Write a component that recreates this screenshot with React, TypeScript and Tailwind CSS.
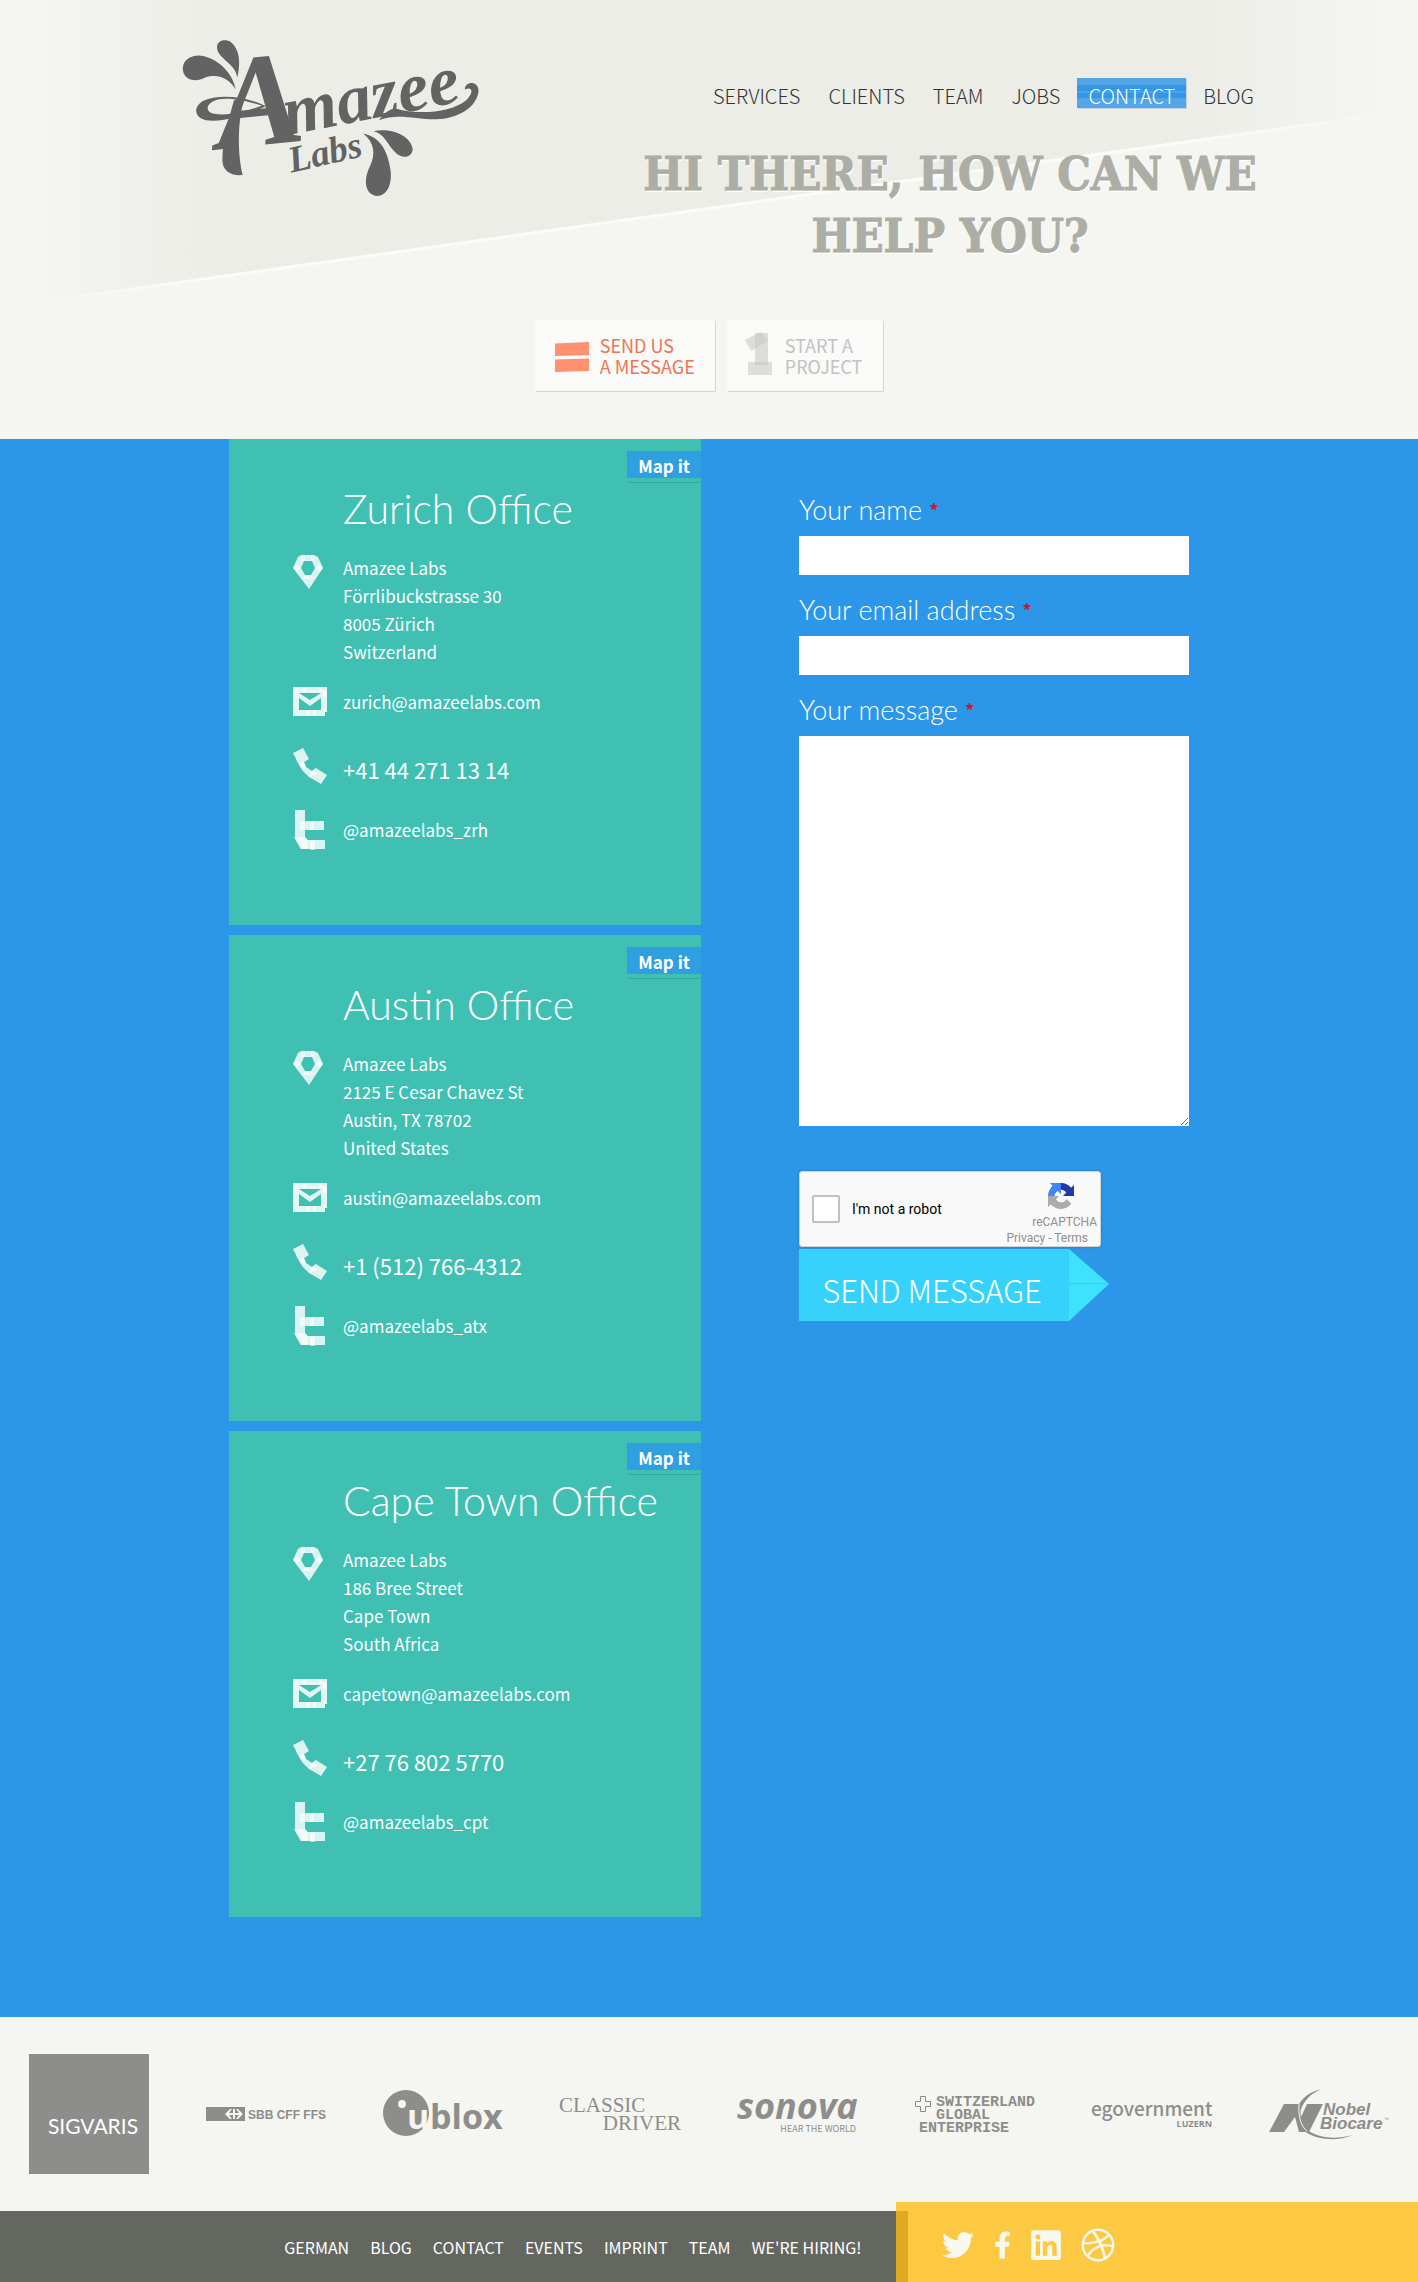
import React from 'react';
import { FaTwitter, FaFacebookF, FaLinkedin, FaDribbble } from 'react-icons/fa';

const sans = "font-['Noto_Sans_CJK_JP','Noto_Sans',sans-serif]";
const display = "font-['Lato',sans-serif]";

function Logo() {
  return (
    <svg viewBox="90 50 910 490" className="h-[163px] w-[303px] overflow-visible" fill="#636363" role="img" aria-label="Amazee Labs">
      <path d="M262 172 C255 128 206 118 201 84 C199 60 226 54 243 66 C270 88 272 130 262 172Z" />
      <path d="M257 207 C238 178 208 158 165 172 C135 190 98 178 98 145 C98 115 130 100 160 107 C210 120 248 160 257 207Z" />
      <path fillRule="evenodd" d="M348 258 C290 228 205 220 160 242 C128 260 132 292 168 300 C225 308 300 280 348 258Z M336 257 C290 240 215 224 184 246 C166 260 170 276 192 281 C240 288 290 272 336 257Z" />
      <path d="M284 230 C262 300 262 400 278 465 C240 468 215 450 217 415 C218 370 232 310 252 240Z" />
      <g fontFamily="'Liberation Serif', serif" fontWeight="700" fontStyle="italic">
        <text transform="translate(206 388) rotate(-6)" fontSize="400">A</text>
        <text transform="translate(412 345) rotate(-11)" fontSize="210">mazee</text>
        <text transform="translate(424 458) rotate(-13)" fontSize="112">Labs</text>
      </g>
      <path d="M688 300 C700 282 718 268 735 264 C800 284 900 280 950 240 C976 214 966 198 946 208 C944 184 985 178 987 210 C985 262 920 297 860 297 C790 297 745 278 688 300Z" />
      <path d="M640 340 C672 365 680 400 660 440 C640 480 645 525 683 528 C715 525 726 490 723 455 C715 390 690 350 640 340Z" />
      <path d="M672 333 C702 340 712 370 735 395 C755 417 786 415 789 388 C785 345 722 322 672 333Z" />
    </svg>
  );
}

const nav = ['SERVICES', 'CLIENTS', 'TEAM', 'JOBS', 'CONTACT', 'BLOG'];

function Header() {
  return (
    <header className="relative h-[439px] bg-[#f5f6f1]">
      <svg className="absolute inset-0 h-[320px] w-full" viewBox="0 0 1418 320" preserveAspectRatio="none" aria-hidden="true">
        <defs>
          <linearGradient id="wedge" x1="0" x2="1" y1="0" y2="0">
            <stop offset="0.02" stopColor="#ecede7" stopOpacity="0" />
            <stop offset="0.15" stopColor="#ecede7" />
            <stop offset="0.84" stopColor="#ecede7" />
            <stop offset="0.98" stopColor="#ecede7" stopOpacity="0" />
          </linearGradient>
          <linearGradient id="edge" x1="0" x2="1" y1="0" y2="0">
            <stop offset="0.03" stopColor="#fbfbf8" stopOpacity="0" />
            <stop offset="0.15" stopColor="#fbfbf8" />
            <stop offset="0.84" stopColor="#fbfbf8" />
            <stop offset="0.98" stopColor="#fbfbf8" stopOpacity="0" />
          </linearGradient>
        </defs>
        <path d="M0 0H1418V108L0 306Z" fill="url(#wedge)" />
        <path d="M0 306L1418 108V111L0 309Z" fill="url(#edge)" />
      </svg>
      <div className="relative mx-auto flex h-[320px] max-w-[1110px] justify-between">
        <a href="#home" className="mt-[37px] ml-[26px] block h-[163px]"><Logo /></a>
        <div className="flex w-[628px] flex-col">
          <nav className="mt-[78px] flex justify-end gap-[6px] text-[20px] leading-6 font-light text-[#333]">
            {nav.map((n) => (
              <a
                key={n}
                href={'#' + n.toLowerCase()}
                className={
                  n === 'CONTACT'
                    ? 'bg-[linear-gradient(#52a6e8_0_7px,#3497e6_7px_13px,#4aa2e8_13px_15px,#3497e6_15px_20px,#52a6e8_20px)] px-[11px] pt-[6px] text-white shadow-[1px_1px_0_#c5d3dc]'
                    : 'px-[11px] pt-[6px] last:pr-[10px]'
                }
              >
                {n}
              </a>
            ))}
          </nav>
          <h1 className="mt-[35px] text-center font-['DejaVu_Serif_Condensed','DejaVu_Serif',serif] text-[47px] leading-[62px] font-bold whitespace-nowrap text-[#acaea5] [-webkit-text-stroke:1px_#acaea5] [text-shadow:1px_2px_0_#fff]">
            HI THERE, HOW CAN WE
            <br />
            HELP YOU?
          </h1>
        </div>
      </div>
      <div className="relative flex justify-center gap-3 text-[18px] leading-[21px]">
        <a href="#message" className="flex h-[71px] items-center bg-[#fafaf8] pr-5 pl-5 text-[#ee7554] shadow-[1px_1px_0_#d6d7d3]">
          <svg viewBox="0 0 34 32" className="mt-[2px] mr-[11px] h-8 w-[34px]" fill="#ff9070">
            <path d="M0 2.500L34 1V14L0 15ZM0 18.500L34 17.500V30L0 31Z" />
          </svg>
          <span>SEND US<br />A MESSAGE</span>
        </a>
        <a href="#project" className="flex h-[71px] items-center bg-[#fafaf8] pr-[21px] pl-[18px] text-[#c2c2c2] shadow-[1px_1px_0_#d6d7d3]">
          <svg viewBox="0 0 27 43" className="mr-[13px] mb-1 h-[43px] w-[27px]" fill="#c4c4c4" fillOpacity="0.55">
            <path d="M0 8L16 0L23 9L6 19Z" />
            <path d="M10 1H23V33H10Z" />
            <path d="M3 30H27V43H3Z" />
          </svg>
          <span>START A<br />PROJECT</span>
        </a>
      </div>
    </header>
  );
}

function PinIcon() {
  return (
    <svg viewBox="0 0 30 34" className="h-[34px] w-[30px]" fill="#fff" fillOpacity="0.8">
      <path fillRule="evenodd" d="M8 0H21L25 2L30 13L16 34L0 13L5 2ZM11 6L8 13L12 20H18L22 13L19 6Z" />
      <path fillOpacity="0.5" d="M8 0H12V6H8ZM18 0H21V6H18ZM0 13L4 9L8 13L4 17ZM22 13L26 9L30 13L26 17ZM12 20H18L22 24H8Z" />
    </svg>
  );
}

function MailIcon() {
  return (
    <svg viewBox="0 0 34 29" className="h-[29px] w-[34px]" fill="#fff" fillOpacity="0.85">
      <path fillRule="evenodd" d="M0 0H34V25H32V29H0ZM6 6L17 13L28 6ZM6 11V23H28V11L17 19Z" />
      <path fillOpacity="0.6" d="M0 3L5 4V9L1 10ZM29 4L34 3V10L29 9ZM13 23H16V29H13ZM20 23H23V29H20ZM10 0H13V5H10ZM26 0H29V5H26Z" />
    </svg>
  );
}

function PhoneIcon() {
  return (
    <svg viewBox="0 0 34 36" className="h-9 w-[34px]" fill="#fff" fillOpacity="0.82">
      <path d="M0 5L10 0L16 11L11 14L13 19L19 23L23 20L34 27L28 36L16 29L10 23L5 15Z" />
      <path fillOpacity="0.6" d="M5 15L11 14L13 19L10 23ZM16 29L19 23L23 20L24 26Z" />
    </svg>
  );
}

function TwitterT() {
  return (
    <svg viewBox="0 0 31 40" className="h-10 w-[31px]" fill="#fff" fillOpacity="0.82">
      <path d="M1 0H11V11H30V20H11V27L14 30H31V39H7L0 27H1Z" />
      <path fillOpacity="0.6" d="M6 11H11V20H6ZM16 11H20V20H16ZM0 27H11L14 31V39H7ZM16 30H21V40H16Z" />
    </svg>
  );
}

const offices = [
  { city: 'Zurich', lines: ['Amazee Labs', 'Förrlibuckstrasse 30', '8005 Zürich', 'Switzerland'], mail: 'zurich@amazeelabs.com', phone: '+41 44 271 13 14', tw: '@amazeelabs_zrh' },
  { city: 'Austin', lines: ['Amazee Labs', '2125 E Cesar Chavez St', 'Austin, TX 78702', 'United States'], mail: 'austin@amazeelabs.com', phone: '+1 (512) 766-4312', tw: '@amazeelabs_atx' },
  { city: 'Cape Town', lines: ['Amazee Labs', '186 Bree Street', 'Cape Town', 'South Africa'], mail: 'capetown@amazeelabs.com', phone: '+27 76 802 5770', tw: '@amazeelabs_cpt' },
];

function Office({ o }: { o: (typeof offices)[number] }) {
  return (
    <article className="relative bg-[#3fc0b3] pt-[46px] pb-[75px] pl-16 text-[17px] leading-7 text-white">
      <a href={'#map-' + o.city} className="absolute top-3 right-0 h-8 border-b border-[#36a99f] text-[17px] leading-[25px] font-bold">
        <span className="block h-[27px] bg-[#2f9fdf] px-[11px] pt-[2px]">Map it</span>
      </a>
      <h2 className={display + ' pl-[50px] text-[41px] leading-[48px] font-light'}>{o.city} Office</h2>
      <div className="mt-[21px] flex">
        <div className="w-[50px] shrink-0 pt-px"><PinIcon /></div>
        <address className="not-italic">{o.lines.map((l) => <div key={l}>{l}</div>)}</address>
      </div>
      <div className="mt-[21px] flex h-[30px] items-center">
        <div className="w-[50px] shrink-0 pb-[2px]"><MailIcon /></div>
        <a href={'mailto:' + o.mail}>{o.mail}</a>
      </div>
      <div className="mt-[31px] flex h-9 items-end">
        <div className="w-[50px] shrink-0"><PhoneIcon /></div>
        <a href="#phone" className="pb-px text-[22px]">{o.phone}</a>
      </div>
      <div className="mt-[26px] flex h-10 items-center">
        <div className="w-[50px] shrink-0 pl-px"><TwitterT /></div>
        <a href="#twitter">{o.tw}</a>
      </div>
    </article>
  );
}

function Label({ id, children }: { id: string; children: string }) {
  return (
    <label htmlFor={id} className={display + ' mb-[10px] block text-[27px] leading-8 font-light text-white'}>
      {children} <span className={sans + ' inline-block h-8 align-top text-[18px] leading-8 font-bold text-[#c8192f]'}>*</span>
    </label>
  );
}

function ContactForm() {
  return (
    <form className="w-[390px] pt-[55px]" onSubmit={(e) => e.preventDefault()}>
      <Label id="name">Your name</Label>
      <input id="name" type="text" className="mb-[19px] block h-[39px] w-full bg-white px-2" />
      <Label id="email">Your email address</Label>
      <input id="email" type="email" className="mb-[19px] block h-[39px] w-full bg-white px-2" />
      <Label id="message">Your message</Label>
      <textarea id="message" className="block h-[390px] w-full resize bg-white p-2" />
      <div className="mt-[45px] flex h-[76px] w-[302px] justify-between rounded-[3px] border border-[#d3d3d3] bg-[#f9f9f9] font-['Roboto',sans-serif] shadow-[0_0_3px_rgba(0,0,0,0.2)]">
        <label className="flex items-center gap-3 pl-3 text-[14px] text-black">
          <input type="checkbox" className="h-7 w-7 appearance-none rounded-[2px] border-2 border-[#c1c1c1] bg-white" />
          I'm not a robot
        </label>
        <div className="flex flex-col items-end pt-[11px] text-[#8f8f8f]">
          <svg viewBox="0 0 64 64" className="mr-6 h-[30px] w-[30px]">
            <path fill="#1c3aa9" d="M64 31.955l-.033-1.37V4.687l-7.16 7.16C50.948 4.674 42.033.093 32.05.093c-10.4 0-19.622 4.960-25.458 12.640l11.736 11.860a15.550 15.550 0 0 1 4.754-5.334c2.050-1.600 4.952-2.906 8.968-2.906.485 0 .860.057 1.135.163 4.976.393 9.288 3.140 11.828 7.124l-8.307 8.307L64 31.953" />
            <path fill="#4285f4" d="M31.862.094l-1.370.033H4.594l7.160 7.160C4.580 13.147 0 22.060 0 32.046c0 10.400 4.960 19.622 12.640 25.458L24.500 45.768a15.550 15.550 0 0 1-5.334-4.754c-1.600-2.050-2.906-4.952-2.906-8.968 0-.485.057-.860.163-1.135.393-4.976 3.140-9.288 7.124-11.828l8.307 8.307L31.860.095" />
            <path fill="#ababab" d="M.001 32.045l.033 1.370v25.898l7.160-7.160c5.860 7.173 14.774 11.754 24.760 11.754 10.400 0 19.622-4.960 25.458-12.640l-11.736-11.860a15.550 15.550 0 0 1-4.754 5.334c-2.050 1.600-4.952 2.906-8.968 2.906-.485 0-.860-.057-1.135-.163-4.976-.393-9.288-3.140-11.828-7.124l8.307-8.307c-10.522.040-22.400.066-27.295-.005" />
          </svg>
          <div className="mt-[5px] mr-[3px] text-[12px] leading-4">reCAPTCHA</div>
          <div className="mr-3 text-[12px] leading-4"><a href="#privacy">Privacy</a> - <a href="#terms">Terms</a></div>
        </div>
      </div>
      <button type="submit" className="mt-[2px] flex h-[72px] text-[31px] font-light text-white">
        <span className="flex h-full w-[270px] items-center justify-center bg-[#37d2fc] pt-[10px] pr-1">SEND MESSAGE</span>
        <svg viewBox="0 0 40 72" className="h-[72px] w-10">
          <path d="M0 0L40 35L0 72Z" fill="#3de2ff" />
          <path d="M0 34.500H40" stroke="#34cdf0" />
        </svg>
      </button>
    </form>
  );
}

function Clients() {
  return (
    <section className="grid h-[194px] grid-cols-8 place-items-center bg-[#f5f6f1] text-[#8d8d8b] [&>svg]:overflow-visible">
      <svg viewBox="0 0 120 120" className="h-[120px] w-[120px]">
        <rect width="120" height="120" fill="#8d8d8b" />
        <text x="64" y="80" textAnchor="middle" fill="#fff" fontFamily="Lato" fontSize="21">SIGVARIS</text>
      </svg>
      <svg viewBox="0 0 120 14" className="h-[14px] w-[120px]" fill="#8d8d8b">
        <rect width="39" height="14" y="0" />
        <path d="M19 7L24 2H26L23 6H27V2H29V6H33L30 2H32L37 7L32 12H30L33 8H29V12H27V8H23L26 12H24Z" fill="#f5f6f1" />
        <text x="42" y="12" fontFamily="Liberation Sans" fontWeight="700" fontSize="12">SBB CFF FFS</text>
      </svg>
      <svg viewBox="0 0 120 48" className="h-[48px] w-[120px]" fill="#8d8d8b">
        <circle cx="23" cy="23" r="23" />
        <circle cx="19" cy="14" r="4" fill="#f5f6f1" />
        <g fontFamily="Open Sans, sans-serif" fontWeight="700" fontSize="34">
          <text x="24" y="39" fill="#f5f6f1">u</text>
          <text x="47" y="39">blox</text>
        </g>
      </svg>
      <svg viewBox="0 0 120 36" className="h-9 w-[120px]" fill="#8d8d8b" fontFamily="Liberation Serif" fontSize="21">
        <text x="-1" y="16">CLASSIC</text>
        <text x="121" y="34" textAnchor="end">DRIVER</text>
      </svg>
      <svg viewBox="0 0 120 36" className="h-9 w-[120px]" fill="#8d8d8b">
        <text x="-1" y="23" fontFamily="Open Sans, sans-serif" fontWeight="700" fontStyle="italic" fontSize="36">sonova</text>
        <text x="118" y="36" textAnchor="end" fontFamily="Noto Sans CJK JP" fontSize="9">HEAR THE WORLD</text>
      </svg>
      <svg viewBox="0 0 120 38" className="h-[38px] w-[120px]" fill="#8d8d8b">
        <path d="M5.500 1.500H10.500V6.500H15.500V11.500H10.500V16.500H5.500V11.500H0.500V6.500H5.500Z" fill="none" stroke="#8d8d8b" />
        <g fontFamily="Liberation Mono" fontSize="15" fontWeight="700">
          <text x="21" y="11">SWITZERLAND</text>
          <text x="21" y="24">GLOBAL</text>
          <text x="4" y="37">ENTERPRISE</text>
        </g>
      </svg>
      <svg viewBox="0 0 120 26" className="h-[26px] w-[120px]" fill="#8d8d8b">
        <text x="-1" y="15" fontFamily="Noto Sans CJK JP" fontSize="19" fontWeight="500">egovernment</text>
        <text x="120" y="26" textAnchor="end" fontFamily="Open Sans" fontWeight="700" fontSize="9">LUZERN</text>
      </svg>
      <svg viewBox="0 0 120 50" className="h-[50px] w-[120px]" fill="#8d8d8b">
        <path d="M15 15H30L32 28L38 15H54L40 43H30L26 28L15 43H0Z" />
        <path d="M52 0C26 12 24 38 48 46C60 50 72 49 84 46C70 52 52 51 42 46C20 36 22 8 52 0Z" />
        <path d="M30 15C29 30 33 38 38 42" fill="none" stroke="#f5f6f1" strokeWidth="1" />
        <g fontFamily="Liberation Sans" fontStyle="italic" fontWeight="700" fontSize="17">
          <text x="54" y="26">Nobel</text>
          <text x="51" y="40">Biocare</text>
        </g>
        <text x="115" y="32" fontFamily="Liberation Sans" fontSize="5">™</text>
      </svg>
    </section>
  );
}

const footerLinks = ['GERMAN', 'BLOG', 'CONTACT', 'EVENTS', 'IMPRINT', 'TEAM', "WE'RE HIRING!"];

export default function App() {
  return (
    <div className={sans + ' bg-[#f5f6f1]'}>
      <Header />
      <main className="bg-[#2c97e9] pb-[100px]">
        <div className="mx-auto flex max-w-[960px] items-start justify-between">
          <div className="flex w-[472px] flex-col gap-[10px]">
            {offices.map((o) => <Office key={o.city} o={o} />)}
          </div>
          <ContactForm />
        </div>
      </main>
      <Clients />
      <footer className="flex h-[71px]">
        <nav className="flex w-[64%] justify-end gap-[21px] bg-[#64675f] pt-[22px] pr-[46px] text-[16px] leading-7 text-white">
          {footerLinks.map((l) => <a key={l} href="#footer">{l}</a>)}
        </nav>
        <div className="-mt-[9px] -ml-3 flex h-20 flex-1 items-center gap-5 bg-[#ffbc13]/79 pt-[5px] pl-[46px] text-[#f8f8ee]">
          <a href="#tw" aria-label="Twitter"><FaTwitter size={32} /></a>
          <a href="#fb" aria-label="Facebook"><FaFacebookF size={28} className="w-[17px]" /></a>
          <a href="#in" aria-label="LinkedIn"><FaLinkedin size={34} className="w-[30px]" /></a>
          <a href="#dr" aria-label="Dribbble"><FaDribbble size={34} /></a>
        </div>
      </footer>
    </div>
  );
}
